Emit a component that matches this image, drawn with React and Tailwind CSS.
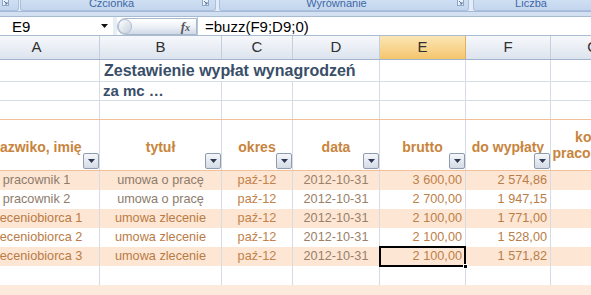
import React from "react";

const W = ["w-[126px]", "w-[122px]", "w-[71px]", "w-[87px]", "w-[86px]", "w-[85px]", "w-[85px]"];
const GRID = "border-r border-[#d6dce5]";

function Launcher() {
  return (
    <svg width="7" height="7" viewBox="0 0 7 7" className="shrink-0">
      <rect x="0.5" y="0.5" width="6" height="6" fill="#e9f0f8" stroke="#8ea6c6" />
      <path d="M2 2 L5 5 M5 3 L5 5 L3 5" stroke="#4a6a98" strokeWidth="0.9" fill="none" />
    </svg>
  );
}

function FilterBtn() {
  return (
    <div className="absolute right-0 bottom-[1px] w-[16px] h-[16px] rounded-[2px] border border-[#8f9cb0] bg-linear-to-b from-[#f5f7fa] to-[#d5dbe5] flex items-center justify-center">
      <svg width="7" height="4" viewBox="0 0 7 4">
        <path d="M0 0 L7 0 L3.5 4 Z" fill="#2c3a52" />
      </svg>
    </div>
  );
}

const rows = [
  ["pracownik 1", "umowa o pracę", "paź-12", "2012-10-31", "3 600,00", "2 574,86", true],
  ["pracownik 2", "umowa o pracę", "paź-12", "2012-10-31", "2 700,00", "1 947,15", false],
  ["zleceniobiorca 1", "umowa zlecenie", "paź-12", "2012-10-31", "2 100,00", "1 771,00", true],
  ["zleceniobiorca 2", "umowa zlecenie", "paź-12", "2012-10-31", "2 100,00", "1 528,00", false],
  ["zleceniobiorca 3", "umowa zlecenie", "paź-12", "2012-10-31", "2 100,00", "1 571,82", true],
];

export default function App() {
  return (
    <div className="w-[591px] h-[295px] overflow-hidden bg-white font-['Liberation_Sans',Arial,sans-serif]">
      {/* Ribbon group labels */}
      <div className="h-[12px] flex bg-[#e3ecf7] border-b border-[#a3b9d6] overflow-hidden">
        <div className="w-[19px] shrink-0 h-[11px] bg-linear-to-b from-[#cfdff3] to-[#c3d6ee] rounded-br-[3px] border-r border-b border-[#aac0dc] flex items-start pl-[2px]">
          <div className="-mt-[1px]"><Launcher /></div>
        </div>
        <div className="ml-[1px] w-[196px] shrink-0 h-[11px] bg-linear-to-b from-[#cfdff3] to-[#c3d6ee] rounded-b-[3px] border-x border-b border-[#aac0dc] flex items-start">
          <div className="flex-1 text-center text-[11px] leading-[11px] -mt-[2px] text-[#3e68a6]">Czcionka</div>
          <div className="-mt-[1px] mr-[6px]"><Launcher /></div>
        </div>
        <div className="ml-[3px] w-[250px] shrink-0 h-[11px] bg-linear-to-b from-[#cfdff3] to-[#c3d6ee] rounded-b-[3px] border-x border-b border-[#aac0dc] flex items-start">
          <div className="flex-1 text-center text-[11px] leading-[11px] -mt-[2px] text-[#3e68a6] pr-[4px]">Wyrównanie</div>
          <div className="-mt-[1px] mr-[4px]"><Launcher /></div>
        </div>
        <div className="ml-[4px] w-[130px] shrink-0 h-[11px] bg-linear-to-b from-[#cfdff3] to-[#c3d6ee] rounded-b-[3px] border-x border-b border-[#aac0dc] flex items-start">
          <div className="w-[114px] text-center text-[11px] leading-[11px] -mt-[2px] text-[#3e68a6]">Liczba</div>
        </div>
      </div>
      <div className="h-[4px] bg-[#d3e0f1]" />

      {/* Formula bar */}
      <div className="h-[20px] flex items-center bg-white border-y border-[#a9bbd3]">
        <div className="w-[113px] shrink-0 h-full flex items-center justify-between pl-[12px] pr-[5px]">
          <span className="text-[15px] leading-none text-black">E9</span>
          <svg width="7" height="4" viewBox="0 0 7 4"><path d="M0 0 L7 0 L3.5 4 Z" fill="#111" /></svg>
        </div>
        <div className="w-[4px] h-full bg-[#e8eef6]" />
        <div className="relative w-[80px] h-[17px] shrink-0 rounded-l-full rounded-r-[2px] border border-[#a8b7cb] bg-linear-to-b from-white via-[#eef2f7] to-[#cfd9e6] flex items-center justify-end pr-[6px]">
          <div className="absolute left-[0px] top-[0px] w-[14px] h-[15px] rounded-full border border-[#b3bfcf] bg-linear-to-br from-white to-[#c7d1de]" />
          <span className="font-['Liberation_Serif',serif] italic font-bold text-[13px] leading-none text-[#555]">f<span className="text-[10px]">x</span></span>
        </div>
        <div className="flex-1 h-full border-l border-[#b8c6d8] pl-[7px] flex items-center">
          <span className="text-[15px] leading-none text-black">=buzz(F9;D9;0)</span>
        </div>
      </div>

      {/* Column headers */}
      <div className="flex -ml-[26px] h-[24px] border-b border-[#9fb3cc]">
        {["A", "B", "C", "D", "E", "F", "G"].map((l, i) => (
          <div
            key={l}
            className={`${W[i]} shrink-0 h-full flex items-center justify-center text-[15px] text-[#303030] border-r ${
              l === "E"
                ? "bg-linear-to-b from-[#fbe6b4] to-[#f5c56c] border-[#e0b060]"
                : "bg-linear-to-b from-[#f6f8fb] to-[#dde4ee] border-[#c3cfdf]"
            }`}
          >
            {l}
          </div>
        ))}
      </div>

      {/* Row 1: title */}
      <div className="flex -ml-[26px] h-[22px] border-b border-[#d6dce5]">
        <div className={`${W[0]} shrink-0 ${GRID}`} />
        <div className={`${W[1]} shrink-0 relative`}>
          <div className="absolute left-[4px] top-0 h-full flex items-center whitespace-nowrap text-[16px] font-bold text-[#394e68]">
            Zestawienie wypłat wynagrodzeń
          </div>
        </div>
        <div className={`${W[2]} shrink-0`} />
        <div className={`${W[3]} shrink-0 ${GRID}`} />
        <div className={`${W[4]} shrink-0 ${GRID}`} />
        <div className={`${W[5]} shrink-0 ${GRID}`} />
        <div className={`${W[6]} shrink-0 ${GRID}`} />
      </div>

      {/* Row 2 */}
      <div className="flex -ml-[26px] h-[19px] border-b border-[#d6dce5]">
        <div className={`${W[0]} shrink-0 ${GRID}`} />
        <div className={`${W[1]} shrink-0 ${GRID} flex items-center pl-[3px] text-[15px] font-bold text-[#394e68] whitespace-nowrap`}>
          za mc …
        </div>
        <div className={`${W[2]} shrink-0 ${GRID}`} />
        <div className={`${W[3]} shrink-0 ${GRID}`} />
        <div className={`${W[4]} shrink-0 ${GRID}`} />
        <div className={`${W[5]} shrink-0 ${GRID}`} />
        <div className={`${W[6]} shrink-0 ${GRID}`} />
      </div>

      {/* Row 3 */}
      <div className="flex -ml-[26px] h-[19px] border-b border-[#f1bf98]">
        {W.map((w, i) => (
          <div key={i} className={`${w} shrink-0 ${GRID}`} />
        ))}
      </div>

      {/* Table header */}
      <div className="flex -ml-[26px] h-[51px] border-b border-[#f1bf98] text-[14px] font-bold text-[#c8843c]">
        {["nazwiko, imię", "tytuł", "okres", "data", "brutto", "do wypłaty"].map((t, i) => (
          <div key={t} className={`${W[i]} shrink-0 ${GRID} relative flex items-center justify-center pt-[4px] whitespace-nowrap`}>
            {t}
            <FilterBtn />
          </div>
        ))}
        <div className={`${W[6]} shrink-0 ${GRID} flex flex-col items-center justify-center leading-[16px] whitespace-nowrap`}>
          <span>koszt</span>
          <span>pracodawcy</span>
        </div>
      </div>

      {/* Data rows */}
      {rows.map((r, idx) => {
        const gray = idx < 2;
        return (
          <div key={idx} className={`flex -ml-[26px] h-[19px] text-[12.7px] ${r[6] ? "bg-[#fde6d4]" : "bg-white"}`}>
            <div className={`${W[0]} shrink-0 ${GRID} flex items-center justify-center whitespace-nowrap ${gray ? "text-[#8d7b6b]" : "text-[#b97b44]"}`}>{r[0]}</div>
            <div className={`${W[1]} shrink-0 ${GRID} flex items-center justify-center whitespace-nowrap ${gray ? "text-[#8d7b6b]" : "text-[#b97b44]"}`}>{r[1]}</div>
            <div className={`${W[2]} shrink-0 ${GRID} flex items-center justify-center text-[#c2824a]`}>{r[2]}</div>
            <div className={`${W[3]} shrink-0 ${GRID} flex items-center justify-center text-[#9a8068]`}>{r[3]}</div>
            <div className={`${W[4]} shrink-0 ${GRID} relative flex items-center justify-end pr-[3px] text-[#bd8048]`}>
              {r[4]}
              {idx === 4 && (
                <>
                  <div className="absolute -left-[1px] -top-[1px] -right-[1px] -bottom-[1px] border-2 border-black" />
                  <div className="absolute -right-[3px] -bottom-[3px] w-[5px] h-[5px] bg-black border border-white" />
                </>
              )}
            </div>
            <div className={`${W[5]} shrink-0 ${GRID} flex items-center justify-end pr-[3px] text-[#b97d47]`}>{r[5]}</div>
            <div className={`${W[6]} shrink-0 ${GRID}`} />
          </div>
        );
      })}

      {/* Empty row */}
      <div className="flex -ml-[26px] h-[19px]">
        {W.map((w, i) => (
          <div key={i} className={`${w} shrink-0 ${GRID}`} />
        ))}
      </div>
      <div className="h-[12px] bg-[#fdeadc]" />
    </div>
  );
}
